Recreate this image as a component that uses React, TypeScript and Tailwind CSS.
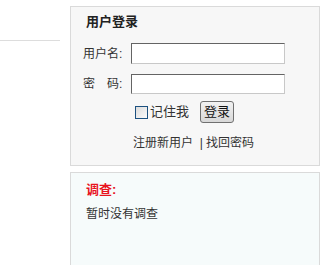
import React from "react";

const App: React.FC = () => {
  return (
    <div className="w-[324px] h-[265px] bg-white flex overflow-hidden text-[12px] leading-[16px] text-[#333] font-['Liberation_Sans','Noto_Sans_CJK_SC',sans-serif]">
      {/* left column */}
      <div className="w-[60px] pt-[40px]">
        <div className="border-t border-[#dddddd]" />
      </div>

      {/* right column */}
      <div className="ml-[10px] w-[250px] pt-[6px] flex flex-col gap-[6px]">
        {/* login box */}
        <div className="h-[160px] shrink-0 border border-[#dadada] bg-[#f7f7f7] pl-[15px] pt-[7px]">
          <h2 className="text-[13px] leading-[16px] font-bold text-[#222]">用户登录</h2>

          <div className="mt-[13px] flex flex-col gap-[10px] -ml-[3px]">
            <div className="flex items-center">
              <span className="w-[48px]">用户名:</span>
              <input
                type="text"
                className="w-[154px] h-[21px] bg-white border border-t-[#646464] border-l-[#646464] border-b-[#c8c8c8] border-r-[#c8c8c8] outline-none"
              />
            </div>
            <div className="flex items-center">
              <span className="w-[48px]">密　码:</span>
              <input
                type="password"
                className="w-[154px] h-[20px] bg-white border border-t-[#646464] border-l-[#646464] border-b-[#c8c8c8] border-r-[#c8c8c8] outline-none"
              />
            </div>
          </div>

          <div className="mt-[7px] ml-[49px] flex items-center">
            <span className="w-[13px] h-[13px] border border-[#1c5180] bg-gradient-to-br from-[#dcdcdc] to-[#fbfbfb]" />
            <span className="ml-[2px] text-[13px]">记住我</span>
            <button className="ml-[11px] w-[34px] h-[22px] border border-[#707070] rounded-[3px] bg-gradient-to-b from-[#f2f2f2] to-[#d8d8d8] text-[13px] leading-[18px] text-[#111]">
              登录
            </button>
          </div>

          <div className="mt-[12px] ml-[47px] text-[12px]">
            注册新用户 &nbsp;| 找回密码
          </div>
        </div>

        {/* survey box */}
        <div className="h-[120px] shrink-0 border border-[#dadada] bg-[#f6fbfb] pl-[15px] pt-[9px]">
          <h3 className="text-[13px] font-bold text-[#e8141e]">调查:</h3>
          <p className="mt-[8px]">暂时没有调查</p>
        </div>
      </div>
    </div>
  );
};

export default App;
